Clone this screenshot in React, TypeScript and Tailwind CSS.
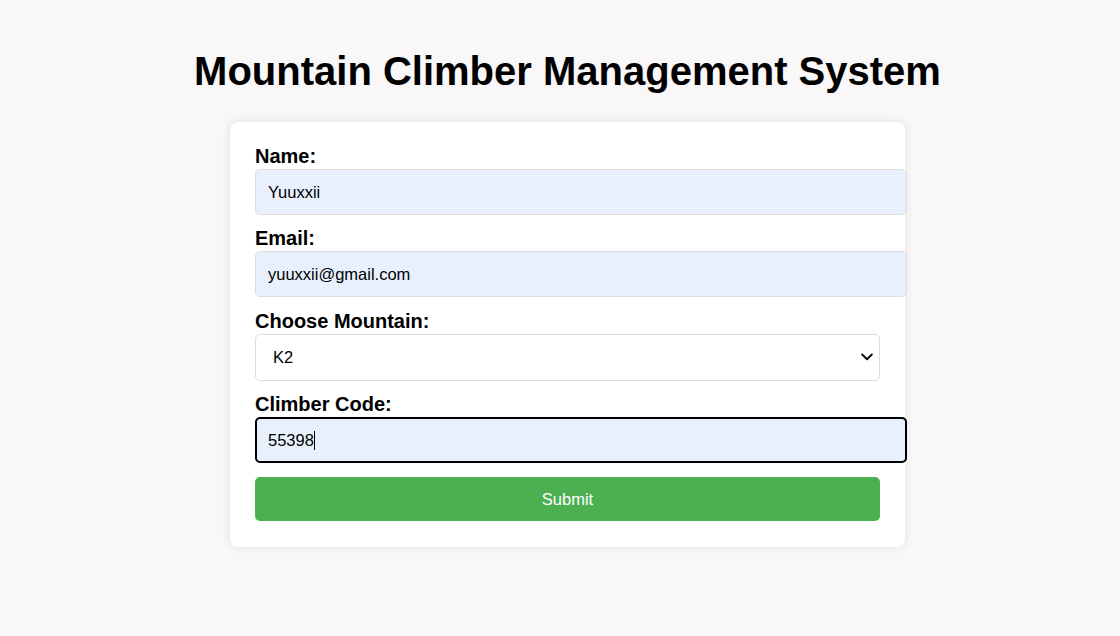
import React from "react";

export default function App() {
  return (
    <div
      className="min-h-screen w-full bg-[#f9f7f8] flex flex-col items-center pl-[15px] text-black"
      style={{ fontFamily: '"Liberation Sans", Arial, sans-serif' }}
    >
      <h1 className="mt-[48px] mb-[28px] text-[40px] leading-[46px] font-bold">
        Mountain Climber Management System
      </h1>
      <form
        className="w-[675px] bg-white rounded-[8px] shadow-[0_0_10px_rgba(0,0,0,0.1)] pt-[26px] px-[25px] pb-[26px] flex flex-col"
        onSubmit={(e) => e.preventDefault()}
      >
        <label className="block text-[20px] leading-[17px] pb-[4px] font-bold">Name:</label>
        <input
          readOnly
          value="Yuuxxii"
          className="w-[652px] h-[46px] px-3 border border-[#dddddd] rounded-[5px] bg-[#e8f0fe] text-[16.5px] mb-[15px] outline-none"
        />
        <label className="block text-[20px] leading-[17px] pb-[4px] font-bold">Email:</label>
        <input
          readOnly
          value="yuuxxii@gmail.com"
          className="w-[652px] h-[46px] px-3 border border-[#dddddd] rounded-[5px] bg-[#e8f0fe] text-[16.5px] mb-[16px] outline-none"
        />
        <label className="block text-[20px] leading-[17px] pb-[4px] font-bold">Choose Mountain:</label>
        <div className="relative w-[625px] h-[47px] mb-[15px]">
          <select
            defaultValue="K2"
            className="appearance-none w-full h-full pl-[17px] pr-8 border border-[#dddddd] rounded-[5px] bg-white text-[16.5px] outline-none"
          >
            <option value="Everest">Everest</option>
            <option value="K2">K2</option>
            <option value="Kangchenjunga">Kangchenjunga</option>
          </select>
          <svg
            className="pointer-events-none absolute right-[7px] top-[19px]"
            width="12"
            height="8"
            viewBox="0 0 12 8"
            fill="none"
          >
            <path d="M1.2 1.5 L6 6.2 L10.8 1.5" stroke="#111" strokeWidth="2" strokeLinecap="round" strokeLinejoin="round" />
          </svg>
        </div>
        <label className="block text-[20px] leading-[17px] pb-[4px] font-bold">Climber Code:</label>
        <div className="w-[652px] h-[46px] px-[11px] border-2 border-black rounded-[5px] bg-[#e8f0fe] text-[16.5px] mb-[14px] flex items-center">
          <span>55398</span>
          <span className="inline-block w-px h-[19px] bg-black"></span>
        </div>
        <button
          type="submit"
          className="w-[625px] h-[44px] bg-[#4caf50] text-white text-[16.5px] rounded-[5px]"
        >
          Submit
        </button>
      </form>
    </div>
  );
}
